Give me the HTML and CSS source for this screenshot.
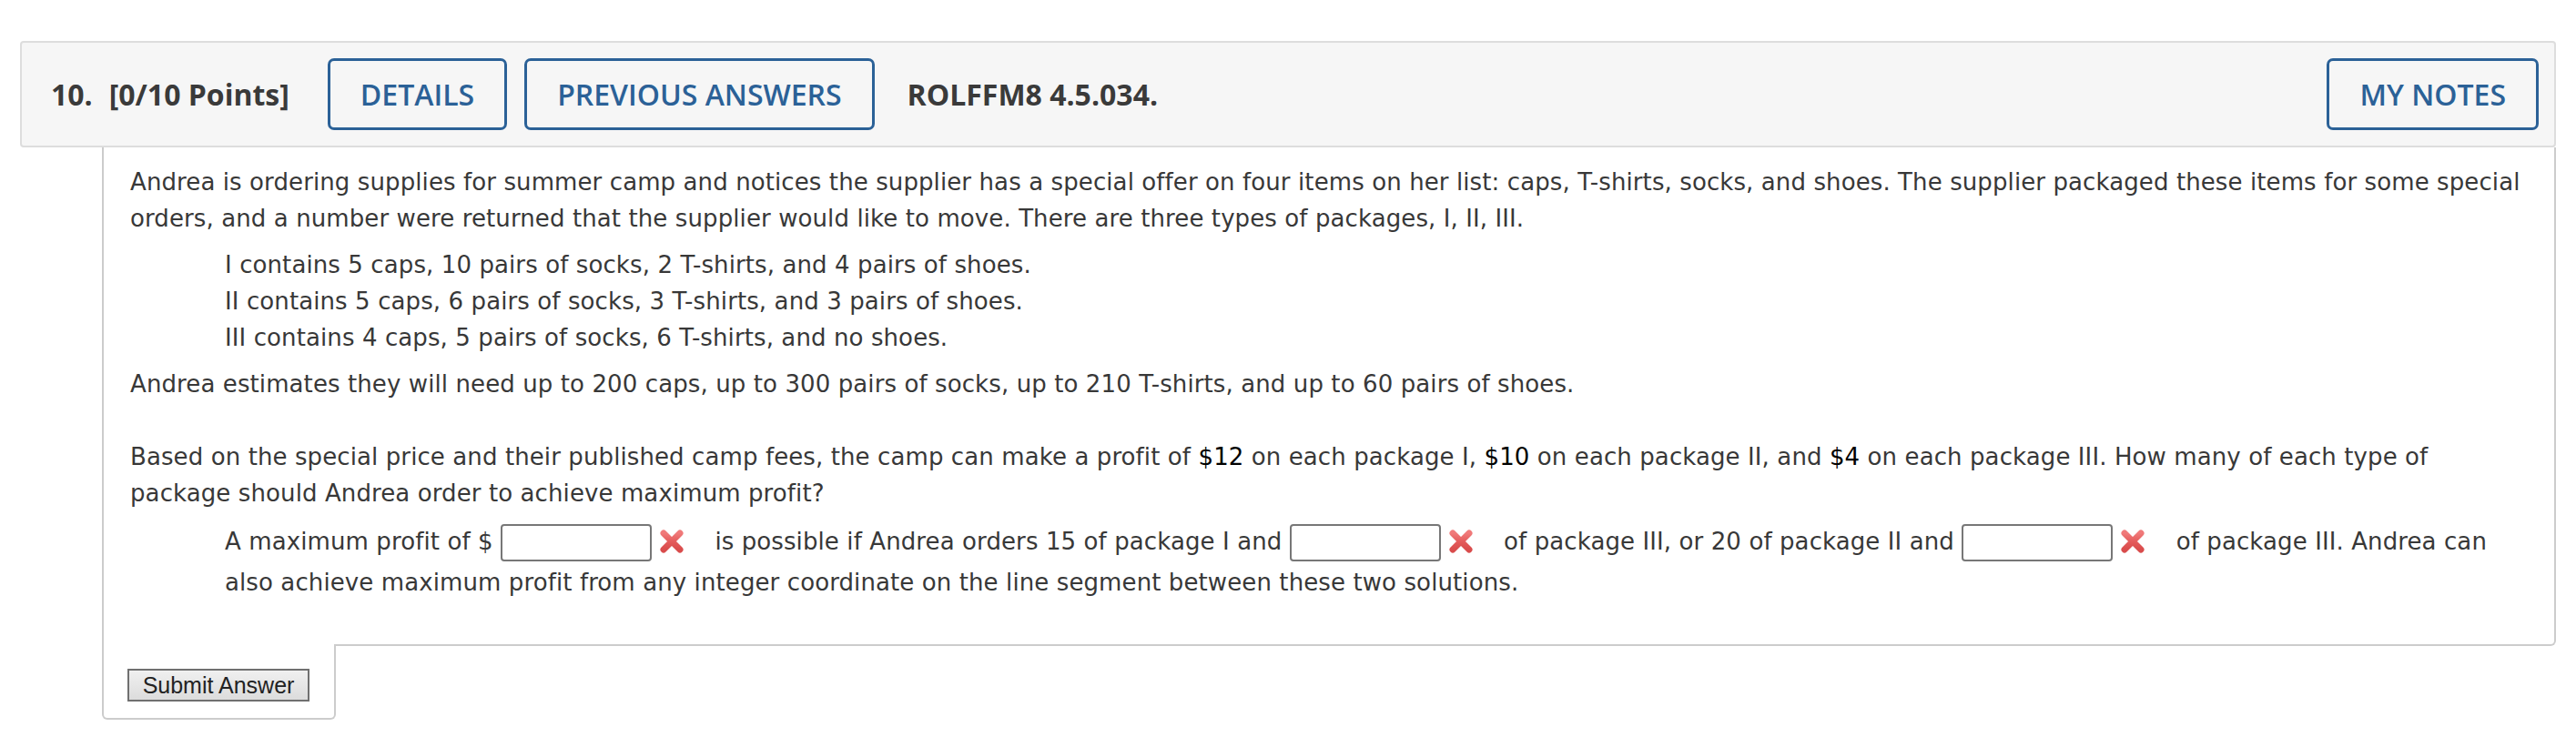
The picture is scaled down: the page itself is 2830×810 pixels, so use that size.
FILE: index.html
```html
<!DOCTYPE html>
<html lang="en">
<head>
<meta charset="utf-8">
<title>Question 10</title>
<link rel="stylesheet" href="styles.css">
</head>
<body>
<div class="page">
  <div class="q-header">
    <span class="q-num">10.</span>
    <span class="q-points">[0/10 Points]</span>
    <button class="hbtn">DETAILS</button>
    <button class="hbtn">PREVIOUS ANSWERS</button>
    <span class="q-id">ROLFFM8 4.5.034.</span>
    <span class="spacer"></span>
    <button class="hbtn">MY NOTES</button>
  </div>
  <div class="q-body">
    <p class="para">Andrea is ordering supplies for summer camp and notices the supplier has a special offer on four items on her list: caps, T-shirts, socks, and shoes. The supplier packaged these items for some special orders, and a number were returned that the supplier would like to move. There are three types of packages, I, II, III.</p>
    <div class="indent para">
      I contains 5 caps, 10 pairs of socks, 2 T-shirts, and 4 pairs of shoes.<br>
      II contains 5 caps, 6 pairs of socks, 3 T-shirts, and 3 pairs of shoes.<br>
      III contains 4 caps, 5 pairs of socks, 6 T-shirts, and no shoes.
    </div>
    <p class="para est">Andrea estimates they will need up to 200 caps, up to 300 pairs of socks, up to 210 T-shirts, and up to 60 pairs of shoes.</p>
    <p class="para">Based on the special price and their published camp fees, the camp can make a profit of <span class="val">$12</span> on each package I, <span class="val">$10</span> on each package II, and <span class="val">$4</span> on each package III. How many of each type of package should Andrea order to achieve maximum profit?</p>
    <div class="indent para answer">A maximum profit of $ <input class="ans" type="text"><svg class="xmark" viewBox="0 0 28 26" aria-hidden="true"><defs><linearGradient id="xg" x1="0" y1="0" x2="0" y2="1"><stop offset="0" stop-color="#f07a7a"/><stop offset="0.5" stop-color="#e45c5c"/><stop offset="1" stop-color="#d94c4c"/></linearGradient></defs><path d="M5 4 L23 22 M23 4 L5 22" stroke="url(#xg)" stroke-width="7" stroke-linecap="round" fill="none"/></svg> is possible if Andrea orders 15 of package I and <input class="ans" type="text"><svg class="xmark" viewBox="0 0 28 26" aria-hidden="true"><path d="M5 4 L23 22 M23 4 L5 22" stroke="url(#xg)" stroke-width="7" stroke-linecap="round" fill="none"/></svg> of package III, or 20 of package II and <input class="ans" type="text"><svg class="xmark" viewBox="0 0 28 26" aria-hidden="true"><path d="M5 4 L23 22 M23 4 L5 22" stroke="url(#xg)" stroke-width="7" stroke-linecap="round" fill="none"/></svg> of package III. Andrea can also achieve maximum profit from any integer coordinate on the line segment between these two solutions.</div>
  </div>
  <div class="q-submit">
    <button class="submit">Submit Answer</button>
  </div>
</div>
</body>
</html>
```
FILE: styles.css
```css
html, body {
  margin: 0;
  padding: 0;
  background: #ffffff;
}

.page {
  padding: 45px 22px 0 22px;
}

.q-header {
  display: flex;
  align-items: center;
  height: 117px;
  box-sizing: border-box;
  padding: 0 17px 0 32px;
  background: #f6f6f6;
  border: 2px solid #dddddd;
  border-radius: 4px;
  font-family: "Open Sans", "Liberation Sans", sans-serif;
  font-size: 32px;
  color: #3a3a3a;
}

.q-num {
  font-weight: 700;
  margin-right: 18px;
}

.q-points {
  font-weight: 700;
  margin-right: 42px;
}

.q-id {
  font-weight: 700;
  margin-left: 17px;
}

.spacer {
  flex: 1;
}

.hbtn {
  height: 79px;
  padding: 0 33px;
  margin-right: 19px;
  background: transparent;
  border: 3px solid #2b6197;
  border-radius: 7px;
  font-family: "Open Sans", "Liberation Sans", sans-serif;
  font-weight: 600;
  font-size: 32px;
  color: #2b6197;
  cursor: pointer;
}

.hbtn:last-child {
  margin-right: 0;
}

.q-body {
  margin-left: 90px;
  padding: 18px 35px 34px 29px;
  border: 2px solid #cccccc;
  border-top: none;
  border-bottom-right-radius: 6px;
  font-family: "DejaVu Sans", Verdana, sans-serif;
  font-size: 26px;
  line-height: 40px;
  letter-spacing: 0.1px;
  color: #383838;
}

.para {
  margin: 0 0 11px 0;
}

.para.est {
  margin-bottom: 40px;
}

.indent {
  margin-left: 104px;
}

.val {
  color: #000000;
}

.answer {
  margin-top: 11px;
  line-height: 45px;
}

.ans {
  width: 166px;
  height: 41px;
  box-sizing: border-box;
  border: 2px solid #777777;
  border-radius: 4px;
  vertical-align: middle;
  font-size: 24px;
  padding: 0 6px;
  margin: 0;
  background: #ffffff;
}

.xmark {
  width: 28px;
  height: 26px;
  vertical-align: middle;
  margin: -4px 25px 0 8px;
}

.q-submit {
  width: 257px;
  box-sizing: border-box;
  margin-left: 90px;
  margin-top: -2px;
  padding: 27px 0 18px 26px;
  background: #ffffff;
  border: 2px solid #cccccc;
  border-top: none;
  border-bottom-left-radius: 6px;
  border-bottom-right-radius: 6px;
}

.submit {
  width: 200px;
  height: 36px;
  padding: 0;
  border: 2px solid #707070;
  border-radius: 0;
  background: linear-gradient(#f0f0f0, #dcdcdc);
  font-family: "Liberation Sans", Arial, sans-serif;
  font-size: 25px;
  color: #222222;
  cursor: pointer;
}
```
